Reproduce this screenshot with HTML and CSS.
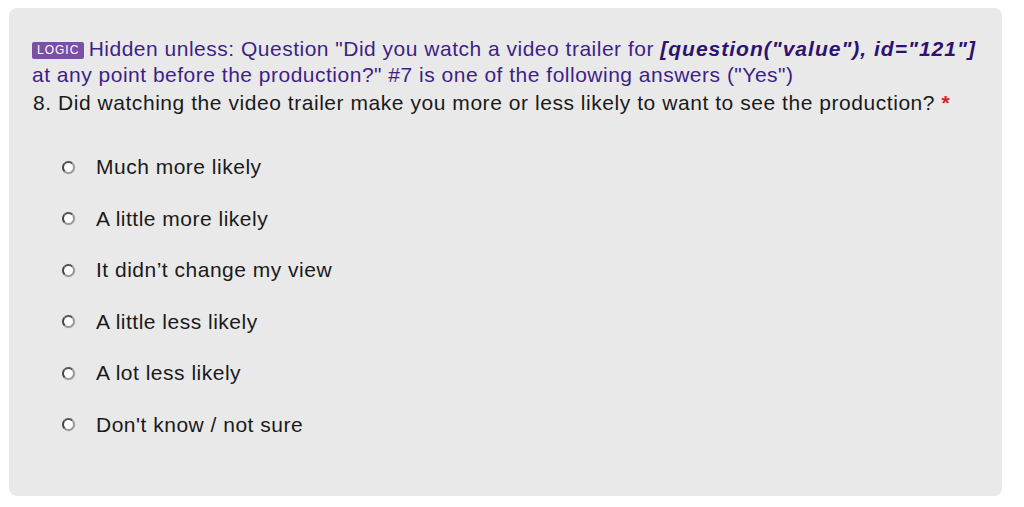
FILE: index.html
```html
<!DOCTYPE html>
<html lang="en">
<head>
    <meta charset="UTF-8">
    <title>Question 8</title>
    <link rel="stylesheet" href="styles.css">
</head>
<body>
    <div class="question-box">
        <div class="logic">
            <span class="badge">Logic</span>
            Hidden unless: Question "Did you watch a video trailer for <em>[question("value"), id="121"]</em> at any point before the production?" #7 is one of the following answers ("Yes")
        </div>
        <h2 class="title">8. Did watching the video trailer make you more or less likely to want to see the production? <span class="req">*</span></h2>

        <div class="options">
            <label class="option"><span class="radio"></span>Much more likely</label>
            <label class="option"><span class="radio"></span>A little more likely</label>
            <label class="option"><span class="radio"></span>It didn’t change my view</label>
            <label class="option"><span class="radio"></span>A little less likely</label>
            <label class="option"><span class="radio"></span>A lot less likely</label>
            <label class="option"><span class="radio"></span>Don't know / not sure</label>
        </div>
    </div>
</body>
</html>
```

FILE: styles.css
```css
body {
    font-family: 'Liberation Sans', Arial, sans-serif;
    background: #fff;
    margin: 0;
    padding: 8px 22px 11px 9px;
}

.question-box {
    background: #e9e9e9;
    border-radius: 8px;
    padding: 28px 20px 0 23px;
    height: 460px;
}

.logic {
    color: #3f1f86;
    font-size: 21px;
    letter-spacing: 0.5px;
    line-height: 26px;
}

.badge {
    display: inline-block;
    background: #7b4fa6;
    color: #fff;
    font-size: 12px;
    line-height: 17px;
    padding: 0 5px;
    border-radius: 2px;
    text-transform: uppercase;
    letter-spacing: 1px;
    vertical-align: 2px;
    margin-right: -2px;
}

.logic em {
    font-weight: bold;
    color: #2e1170;
    letter-spacing: 1px;
}

.title {
    font-size: 21px;
    letter-spacing: 0.55px;
    font-weight: normal;
    color: #1a1a1a;
    line-height: 26px;
    margin: 2px 0 0 1px;
}

.req {
    color: #d62020;
    font-weight: bold;
}

.options {
    margin: 39px 0 0 30px;
    display: flex;
    flex-direction: column;
    gap: 27.6px;
}

.option {
    display: flex;
    align-items: center;
    font-size: 21px;
    letter-spacing: 0.5px;
    line-height: 24px;
    color: #1a1a1a;
}

.radio {
    width: 9px;
    height: 9px;
    border-radius: 50%;
    border: 2px solid #999;
    border-top-color: #555;
    border-left-color: #444;
    background: #fff;
    margin-right: 21px;
    box-shadow: 0 0 1px #bbb;
}
```
